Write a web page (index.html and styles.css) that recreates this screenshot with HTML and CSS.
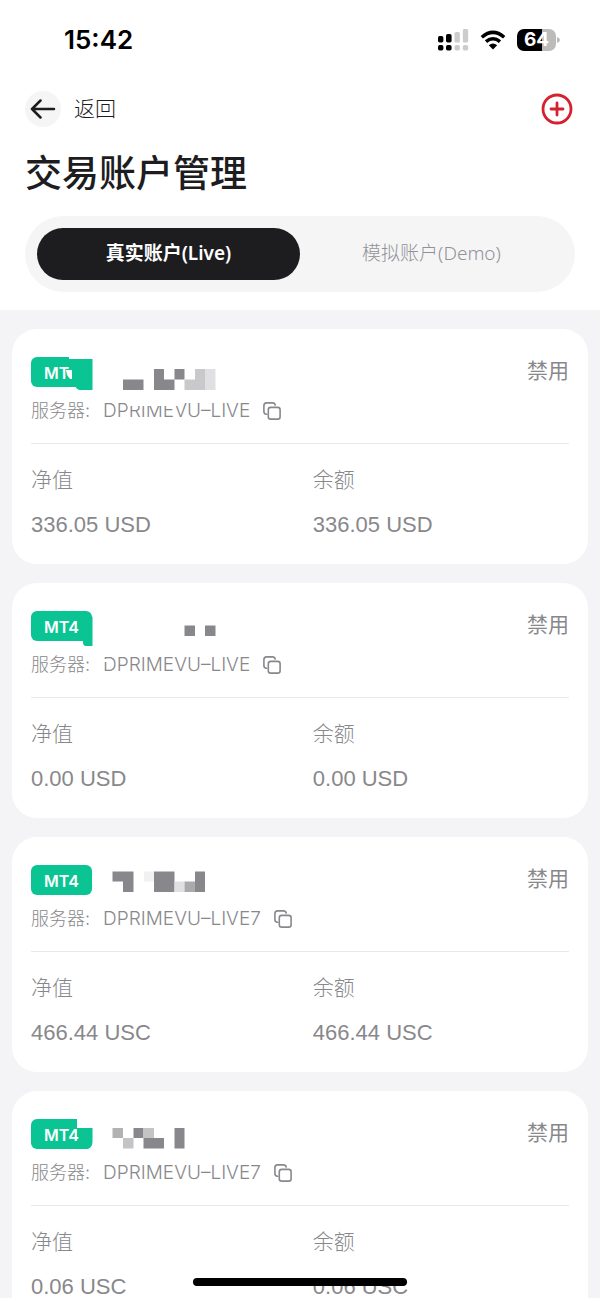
FILE: index.html
```html
<!DOCTYPE html>
<html lang="zh-CN">
<head>
<meta charset="utf-8">
<meta name="viewport" content="width=device-width, initial-scale=1">
<title>交易账户管理</title>
<link rel="stylesheet" href="styles.css">
</head>
<body>
<svg class="defs" aria-hidden="true">
  <symbol id="copy" viewBox="0 0 18 18"><path d="M3.500 12.300Q.9 12 .9 9.500V3.700Q.9.900 3.700.900H9.500Q11.700.900 12.200 3M7.700 5.400H14.700Q17.100 5.400 17.100 7.800V14.700Q17.100 17.100 14.700 17.100H7.700Q5.300 17.100 5.300 14.700V7.800Q5.300 5.400 7.700 5.400Z" fill="none" stroke="currentColor" stroke-width="1.600" stroke-linecap="round"/></symbol>
</svg>
<div class="app">
  <header class="top">
    <div class="status-bar">
      <span class="time">15:42</span>
      <div class="status-icons">
        <svg width="31" height="22" viewBox="0 0 31 22" aria-hidden="true">
          <g fill="#000"><rect x="0" y="7" width="5.400" height="6.500" rx="1.700"/><rect x="8" y="5" width="5.600" height="8.500" rx="1.700"/><rect x="0" y="16" width="5.400" height="5.500" rx="1.700"/><rect x="8" y="16" width="5.600" height="5.500" rx="1.700"/></g>
          <g fill="#ccc"><rect x="16.500" y="3" width="5.400" height="10.500" rx="1.500"/><rect x="24.800" y="0" width="5.400" height="13.500" rx="1.500"/><rect x="16.500" y="16" width="5.400" height="5.500" rx="1.700"/><rect x="24.800" y="16" width="5.400" height="5.500" rx="1.700"/></g>
        </svg>
        <svg width="26" height="20" viewBox="0 0 26 20" aria-hidden="true">
          <path d="M1.800 7.200Q13-2.500 24.200 7.200M6 11.700Q13 5.800 20 11.700" fill="none" stroke="#000" stroke-width="3.500"/><path d="M13 19.500L8.800 15.200Q13 12 17.200 15.200Z"/>
        </svg>
        <div class="battery"><span class="battery-level">64</span><svg width="3" height="6" viewBox="0 0 3 6" aria-hidden="true"><path d="M0 0Q3 1 3 3T0 6Z" fill="#bbb"/></svg></div>
      </div>
    </div>
    <nav class="nav">
      <button class="back" type="button">
        <span class="back-circle"><svg width="26" height="20" viewBox="0 0 26 20" aria-hidden="true"><path d="M24 10H2M10.500 1.500L2 10L10.500 18.500" fill="none" stroke="#1d1d1f" stroke-width="2.500" stroke-linecap="round" stroke-linejoin="round"/></svg></span>
        <span>返回</span>
      </button>
      <button class="add" type="button" aria-label="添加账户"><svg width="32" height="32" viewBox="0 0 32 32" aria-hidden="true"><circle cx="16" cy="16" r="14" fill="none" stroke="#d5202e" stroke-width="2.800"/><path d="M16 10V22M10 16H22" stroke="#d5202e" stroke-width="2.800" stroke-linecap="round"/></svg></button>
    </nav>
    <h1 class="title">交易账户管理</h1>
    <div class="tabs" role="tablist">
      <button class="tab tab-active" type="button" role="tab" aria-selected="true">真实账户(Live)</button>
      <button class="tab" type="button" role="tab" aria-selected="false">模拟账户(Demo)</button>
    </div>
  </header>
  <main class="accounts">
    <article class="card">
      <div class="card-head"><span class="badge">MT4</span><span class="state">禁用</span>
        <svg class="mosaic" width="200" height="52" viewBox="0 0 200 52" aria-hidden="true">
          <path fill="#fff" d="M39 0H63V2H39ZM97 40H154V49H97Z"/>
          <path fill="#0ac493" d="M39 2H62.500V33H50Q47 33 45 29L39 28Z"/>
          <path fill="#fff" d="M36 13H42V22H40L37 18Z"/>
          <path fill="#88888c" d="M93 22.500H113.500V33H93ZM124 12H134V22.500H144.500V33H124ZM144.500 12H154.500V22.500H144.500Z"/>
          <path fill="#c9c9cb" d="M154.500 22.500H165V12H175V33H154.500Z"/><path fill="#e0e0e2" d="M175 12H185.500V33H175Z"/>
        </svg>
      </div>
      <div class="server"><span>服务器:</span><span class="server-name">DPRIMEVU–LIVE</span><button class="copy" type="button" aria-label="复制"><svg width="18" height="18"><use href="#copy"/></svg></button></div>
      <dl class="figures"><div><dt>净值</dt><dd>336.05 USD</dd></div><div><dt>余额</dt><dd>336.05 USD</dd></div></dl>
    </article>
    <article class="card">
      <div class="card-head"><span class="badge">MT4</span><span class="state">禁用</span>
        <svg class="mosaic" width="200" height="54" viewBox="0 0 200 54" aria-hidden="true">
          <path fill="#fff" d="M73 48H77V51H73Z"/>
          <path fill="#0ac493" d="M53 6Q58 2 62.500 6V35H56Q53 35 53 31Z"/>
          <path fill="#88888c" d="M154.500 14.500H165V25H154.500ZM175 14.500H185.500V25H175Z"/>
        </svg>
      </div>
      <div class="server"><span>服务器:</span><span class="server-name">DPRIMEVU–LIVE</span><button class="copy" type="button" aria-label="复制"><svg width="18" height="18"><use href="#copy"/></svg></button></div>
      <dl class="figures"><div><dt>净值</dt><dd>0.00 USD</dd></div><div><dt>余额</dt><dd>0.00 USD</dd></div></dl>
    </article>
    <article class="card">
      <div class="card-head"><span class="badge">MT4</span><span class="state">禁用</span>
        <svg class="mosaic" width="200" height="40" viewBox="0 0 200 40" aria-hidden="true">
          <path fill="#88888c" d="M82.500 6.500H103.500V27H93V16.500H82.500ZM124 6.500H144.500V27H124ZM165 6.500H175V27H165Z"/>
          <path fill="#f1f1f2" d="M114 6.500H124V16.500H114Z"/><path fill="#e0e0e2" d="M144.500 16.500H154.500V27H144.500Z"/><path fill="#aaaaad" d="M154.500 16.500H165V27H154.500Z"/>
        </svg>
      </div>
      <div class="server"><span>服务器:</span><span class="server-name">DPRIMEVU–LIVE7</span><button class="copy" type="button" aria-label="复制"><svg width="18" height="18"><use href="#copy"/></svg></button></div>
      <dl class="figures"><div><dt>净值</dt><dd>466.44 USC</dd></div><div><dt>余额</dt><dd>466.44 USC</dd></div></dl>
    </article>
    <article class="card">
      <div class="card-head"><span class="badge">MT4</span><span class="state">禁用</span>
        <svg class="mosaic" width="200" height="40" viewBox="0 0 200 40" aria-hidden="true">
          <path fill="#fff" d="M47 0H63V9H47Z"/><path fill="#0ac493" d="M54 9H62.500V23Q62 29 57 30H54Z"/>
          <path fill="#88888c" d="M103.500 9H113.500V19H103.500ZM113.500 19H134V29.500H113.500ZM144.500 9H154.500V29.500H144.500Z"/>
          <path fill="#b2b2b5" d="M82.500 9H93V19H82.500Z"/><path fill="#c4c4c6" d="M93 19H103.500V29.500H93ZM113.500 9H124V19H113.500Z"/>
        </svg>
      </div>
      <div class="server"><span>服务器:</span><span class="server-name">DPRIMEVU–LIVE7</span><button class="copy" type="button" aria-label="复制"><svg width="18" height="18"><use href="#copy"/></svg></button></div>
      <dl class="figures"><div><dt>净值</dt><dd>0.06 USC</dd></div><div><dt>余额</dt><dd>0.06 USC</dd></div></dl>
    </article>
  </main>
  <div class="home-indicator"></div>
</div>
</body>
</html>
```
FILE: styles.css
```css
* { box-sizing: border-box; }
body {
  margin: 0;
  background: #f4f4f7;
  color: #1d1d1f;
  font-family: Inter, "Noto Sans CJK SC", sans-serif;
}
button { padding: 0; border: 0; background: none; color: inherit; font: inherit; cursor: pointer; }
svg { display: block; }
.defs { position: absolute; width: 0; height: 0; }
.app { display: flex; flex-direction: column; height: 100vh; }
.top { flex: none; padding: 0 25px 18px; background: #fff; }
.status-bar { display: flex; align-items: center; justify-content: space-between; height: 80px; padding: 0 15px 0 39px; color: #000; }
.time { font-size: 26px; font-weight: 600; line-height: 32px; }
.status-icons { display: flex; align-items: center; gap: 11px; }
.battery { display: flex; align-items: center; gap: 1px; }
.battery-level {
  width: 39px;
  border-radius: 7px;
  background: linear-gradient(90deg, #000 64%, #bbb 64%);
  color: #fff;
  font-size: 19px;
  font-weight: 700;
  line-height: 22px;
  text-align: center;
}
.nav { display: flex; align-items: center; justify-content: space-between; margin-top: 11px; padding-right: 2px; }
.back { display: flex; align-items: center; gap: 13px; font-size: 21px; font-weight: 300; line-height: 36px; }
.back-circle { display: grid; place-items: center; width: 36px; height: 36px; border-radius: 50%; background: #f5f5f6; }
.title { margin: 22px 0 18px; font-size: 37px; font-weight: 500; line-height: 49px; }
.tabs { display: grid; grid-template-columns: 1fr 1fr; padding: 12px; border-radius: 38px; background: #f5f5f6; }
.tab { height: 52px; padding-bottom: 2px; border-radius: 26px; color: #929296; font: 300 19px/28px "Noto Sans", "Noto Sans CJK SC", sans-serif; }
.tab-active { background: #1d1d1f; color: #fff; font-weight: 600; }
.accounts { flex: 1; min-height: 0; display: flex; flex-direction: column; gap: 19px; padding: 19px 12px; overflow-y: auto; scrollbar-width: none; }
.card { flex: none; padding: 28px 19px; border-radius: 25px; background: #fff; color: #88888c; }
.card-head { position: relative; display: flex; align-items: center; justify-content: space-between; height: 30px; }
.badge { height: 30px; padding: 2px 13px 0; border-radius: 6px; background: #0ac493; color: #fff; font-size: 16px; font-weight: 600; line-height: 28px; }
.state { padding-bottom: 2px; font-size: 21px; line-height: 28px; }
.mosaic { position: absolute; top: 0; left: -1px; z-index: 1; pointer-events: none; }
.server { display: flex; align-items: center; gap: 13px; padding: 12px 0 20px; border-bottom: 1px solid #e9e9eb; font-size: 18px; font-weight: 300; line-height: 24px; }
.server-name { font-size: 19px; }
.figures { display: grid; grid-template-columns: 11fr 10fr; margin: 0; padding-top: 22px; }
.figures dt { font-size: 21px; font-weight: 300; line-height: 28px; }
.figures dd { margin: 20px 0 0; font-family: "Liberation Sans", sans-serif; font-size: 22px; line-height: 22px; }
.home-indicator { position: fixed; bottom: 12px; left: 50%; width: 214px; height: 8px; margin-left: -107px; border-radius: 4px; background: #000; }
```
